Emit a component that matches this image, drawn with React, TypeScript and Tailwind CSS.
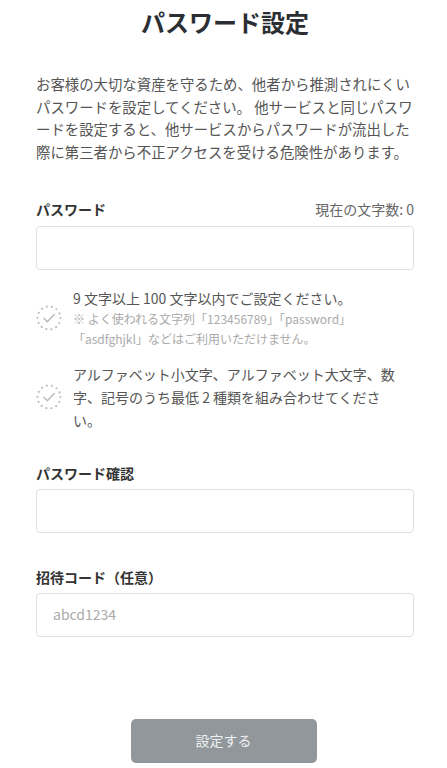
import React from "react";

function DottedCheck() {
  return (
    <svg width="26" height="26" viewBox="0 0 26 26" className="shrink-0">
      <circle
        cx="13"
        cy="13"
        r="11.5"
        fill="none"
        stroke="#bdbdbd"
        strokeWidth="2.2"
        strokeDasharray="0 5.16"
        strokeLinecap="round"
      />
      <path
        d="M8 13.3l3.3 3.4L18.2 9.4"
        fill="none"
        stroke="#b8b8b8"
        strokeWidth="1.4"
        strokeLinecap="round"
        strokeLinejoin="round"
      />
    </svg>
  );
}

export default function App() {
  return (
    <div
      className="min-h-[768px] w-[447px] bg-white pl-[36px] pr-[33px]"
      style={{ fontFamily: '"Noto Sans CJK JP", "Noto Sans", sans-serif' }}
    >
      <h1 className="mt-[6px] text-center text-[24px] font-bold leading-[32px] text-[#2b2f33]">
        パスワード設定
      </h1>

      <p className="mt-[35px] text-[14.4px] leading-[22.7px] text-[#555555] whitespace-nowrap">
        お客様の大切な資産を守るため、他者から推測されにくい
        <br />
        パスワードを設定してください。 他サービスと同じパスワ
        <br />
        ードを設定すると、他サービスからパスワードが流出した
        <br />
        際に第三者から不正アクセスを受ける危険性があります。
      </p>

      <div className="mt-[34px] flex items-center justify-between leading-[22px]">
        <span className="text-[14px] font-bold text-[#333333]">パスワード</span>
        <span className="text-[14px] text-[#666666]">現在の文字数:&nbsp;0</span>
      </div>
      <div className="mt-[6px] h-[44px] rounded-[4px] border border-[#e0e0e0] bg-white" />

      <div className="mt-[17px] flex items-center gap-[11px]">
        <DottedCheck />
        <div>
          <div className="text-[14px] leading-[22px] text-[#555555]">
            9 文字以上 100 文字以内でご設定ください。
          </div>
          <div className="text-[12px] leading-[20px] text-[#aaaaaa]">
            ※ よく使われる文字列「123456789」「password」
            <br />
            「asdfghjkl」などはご利用いただけません。
          </div>
        </div>
      </div>

      <div className="mt-[14px] flex items-center gap-[11px]">
        <DottedCheck />
        <div className="text-[14px] leading-[23px] text-[#555555] whitespace-nowrap">
          アルファベット小文字、アルファベット大文字、数
          <br />
          字、記号のうち最低 2 種類を組み合わせてくださ
          <br />
          い。
        </div>
      </div>

      <div className="mt-[30px] text-[14px] font-bold leading-[22px] text-[#333333]">
        パスワード確認
      </div>
      <div className="mt-[5px] h-[44px] rounded-[4px] border border-[#e0e0e0] bg-white" />

      <div className="mt-[33px] text-[14px] font-bold leading-[22px] text-[#333333]">
        招待コード（任意）
      </div>
      <div className="mt-[5px] flex h-[44px] items-center rounded-[4px] border border-[#e0e0e0] bg-white pl-[16px]">
        <span className="text-[14px] text-[#aaaaaa]">abcd1234</span>
      </div>

      <div className="mt-[82px] flex justify-center pr-[3px]">
        <button className="h-[44px] w-[186px] rounded-[5px] bg-[#92979c] text-[14px] text-[#eef0f2]">
          設定する
        </button>
      </div>
    </div>
  );
}
